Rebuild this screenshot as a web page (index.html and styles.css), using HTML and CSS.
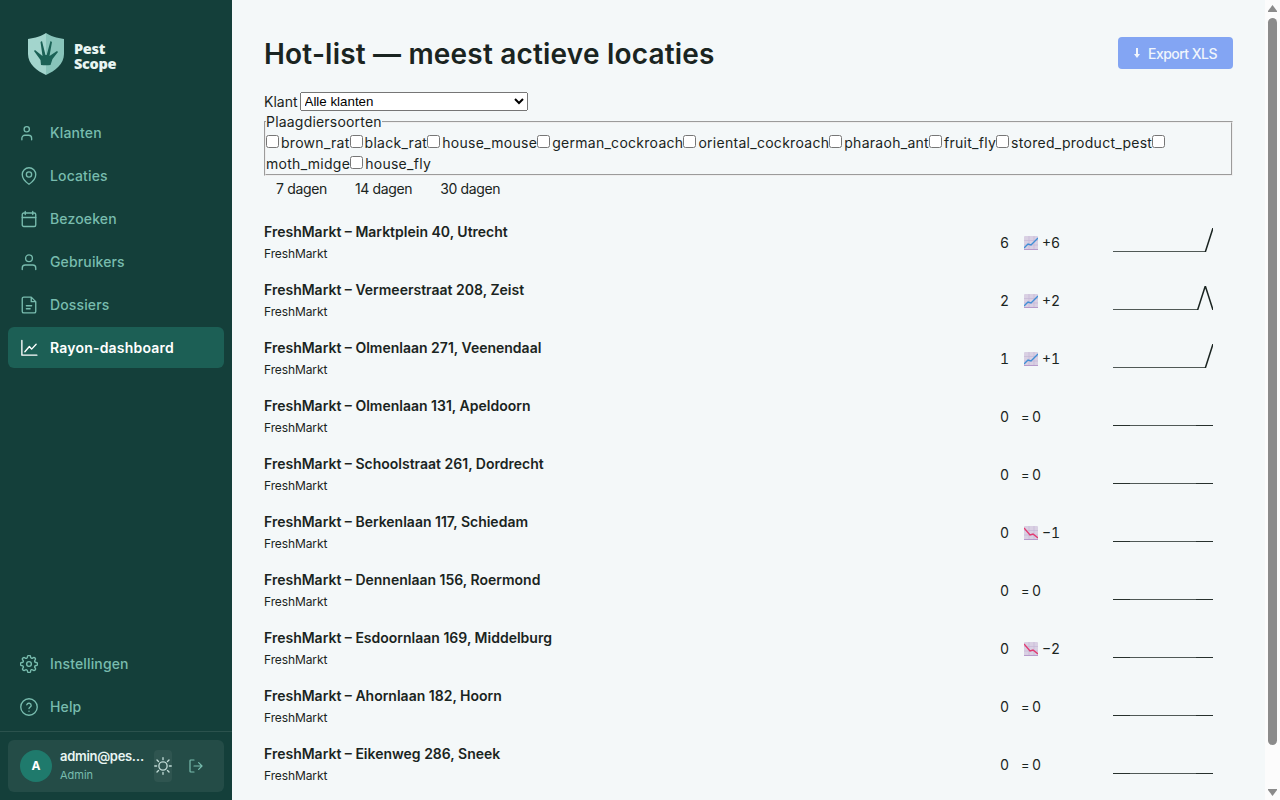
FILE: index.html
```html
<!DOCTYPE html>
<html lang="nl">
<head>
    <meta charset="UTF-8">
    <meta name="viewport" content="width=device-width, initial-scale=1.0">
    <title>PestScope – Rayon-dashboard</title>
    <link rel="stylesheet" href="styles.css">
</head>
<body>
    <aside class="sidebar">
        <div class="brand">
            <svg class="brand-logo" width="36" height="42" viewBox="0 0 36 42">
                <path fill="#a3d5cd" d="M18 0C14 3 7 5 0 6v15c0 10 9 17 18 21z"/>
                <path fill="#88c4ba" d="M18 0c4 3 11 5 18 6v15c0 10-9 17-18 21z"/>
                <path fill="#1b6156" d="M13 32l-.5-5-6.500-9 1-1 7.500 6-2-14 1.500-1 3.500 14h1.200l3.800-14 1.500 1-2.500 14 7.500-5 1 1-5.500 7-2 6q-4.500.5-9.500 0z"/>
            </svg>
            <div class="brand-name">Pest<br>Scope</div>
        </div>
        <nav class="nav">
            <a class="nav-item"><svg class="icon" viewBox="0 0 24 24"><circle cx="9" cy="7" r="3.500"/><path d="M2.500 21v-2a4 4 0 0 1 4-4h5a4 4 0 0 1 4 4v2"/></svg>Klanten</a>
            <a class="nav-item"><svg class="icon" viewBox="0 0 24 24"><path d="M21 10c0 7-9 13-9 13s-9-6-9-13a9 9 0 0 1 18 0z"/><circle cx="12" cy="10" r="3.500"/></svg>Locaties</a>
            <a class="nav-item"><svg class="icon" viewBox="0 0 24 24"><rect x="3" y="4" width="18" height="18" rx="2"/><path d="M17 2v4M7 2v4M3 10h18"/></svg>Bezoeken</a>
            <a class="nav-item"><svg class="icon" viewBox="0 0 24 24"><circle cx="12" cy="7" r="4.500"/><path d="M21 22v-2a4 4 0 0 0-4-4H7a4 4 0 0 0-4 4v2"/></svg>Gebruikers</a>
            <a class="nav-item"><svg class="icon" viewBox="0 0 24 24"><path d="M15 1.500H5a2 2 0 0 0-2 2v17a2 2 0 0 0 2 2h14a2 2 0 0 0 2-2v-13zM15 1.500v6h6M8.500 13h7M8.500 17h5"/></svg>Dossiers</a>
            <a class="nav-item active"><svg class="icon" viewBox="0 0 24 24"><path d="M2.500 2v19.500h20M6.500 17l6-7 3 3.500 6-6.500"/></svg>Rayon-dashboard</a>
        </nav>
        <nav class="nav">
            <a class="nav-item"><svg class="icon" viewBox="0.5 0.5 23 23"><circle cx="12" cy="12" r="3"/><path d="M19.400 15a1.650 1.650 0 0 0 .33 1.820l.06.06a2 2 0 1 1-2.830 2.830l-.06-.06a1.650 1.650 0 0 0-1.820-.33 1.650 1.650 0 0 0-1 1.510V21a2 2 0 0 1-4 0v-.09A1.650 1.650 0 0 0 9 19.400a1.650 1.650 0 0 0-1.820.33l-.06.06a2 2 0 1 1-2.830-2.830l.06-.06a1.650 1.650 0 0 0 .33-1.820 1.650 1.650 0 0 0-1.510-1H3a2 2 0 0 1 0-4h.09A1.650 1.650 0 0 0 4.600 9a1.650 1.650 0 0 0-.33-1.820l-.06-.06a2 2 0 1 1 2.830-2.830l.06.06a1.650 1.650 0 0 0 1.820.33H9a1.650 1.650 0 0 0 1-1.510V3a2 2 0 0 1 4 0v.09a1.650 1.650 0 0 0 1 1.510 1.650 1.650 0 0 0 1.820-.33l.06-.06a2 2 0 1 1 2.830 2.830l-.06.06a1.650 1.650 0 0 0-.33 1.820V9a1.650 1.650 0 0 0 1.510 1H21a2 2 0 0 1 0 4h-.09a1.650 1.650 0 0 0-1.510 1z"/></svg>Instellingen</a>
            <a class="nav-item"><svg class="icon" viewBox="0 0 24 24"><circle cx="12" cy="12" r="11"/><path d="M9.090 9a3 3 0 0 1 5.830 1c0 2-2.920 2.500-2.920 4M12 17.500v.1"/></svg>Help</a>
        </nav>
        <div class="user-wrap">
            <div class="user">
                <div class="avatar">A</div>
                <div class="user-text">
                    <div class="user-name">admin@pes…</div>
                    <div class="user-role">Admin</div>
                </div>
                <button class="theme-btn"><svg class="icon sun" viewBox="0 0 24 24"><circle cx="12" cy="12" r="5.500"/><path d="M12 1v2.500M12 20.500V23M1 12h2.500M20.500 12H23M4 4l2 2M18 18l2 2M4 20l2-2M18 6l2-2"/></svg></button>
                <svg class="icon logout" viewBox="0 0 24 24"><path d="M9 3H4a1 1 0 0 0-1 1v16a1 1 0 0 0 1 1h5M16 17l5-5-5-5M21 12H9"/></svg>
            </div>
        </div>
    </aside>

    <main class="content">
        <header class="page-header">
            <h1>Hot-list — meest actieve locaties</h1>
            <button class="export-btn" disabled><svg width="6" height="10" viewBox="0 0 6 10"><path d="M2 0h2v6h2L3 10 0 6h2z"/></svg><span>Export XLS</span></button>
        </header>
        <div class="klant"><label for="klant">Klant</label>
            <select id="klant"><option>Alle klanten</option></select>
        </div>
        <fieldset class="soorten">
            <legend>Plaagdiersoorten</legend>
            <label><input type="checkbox"><span>brown_rat</span></label><label><input type="checkbox"><span>black_rat</span></label><label><input type="checkbox"><span>house_mouse</span></label><label><input type="checkbox"><span>german_cockroach</span></label><label><input type="checkbox"><span>oriental_cockroach</span></label><label><input type="checkbox"><span>pharaoh_ant</span></label><label><input type="checkbox"><span>fruit_fly</span></label><label><input type="checkbox"><span>stored_product_pest</span></label><label><input type="checkbox"> <span>moth_midge</span></label><label><input type="checkbox"><span>house_fly</span></label>
        </fieldset>
        <div class="periods">
            <button>7 dagen</button><button>14 dagen</button><button>30 dagen</button>
        </div>
        <div class="hotlist" id="hotlist"></div>
    </main>

    <div class="scrollbar">
        <svg width="9" height="7" viewBox="0 0 9 7"><path d="M4.500 0L9 6v1H0V6z"/></svg>
        <div class="thumb"></div>
        <svg width="9" height="7" viewBox="0 0 9 7"><path d="M4.500 7L9 1V0H0v1z"/></svg>
    </div>
    <script src="script.js"></script>
</body>
</html>
```
FILE: styles.css
```css
* {
    box-sizing: border-box;
}

body {
    margin: 0;
    height: 800px;
    overflow: hidden;
    display: flex;
    font-family: Inter, "Liberation Sans", sans-serif;
    font-size: 14px;
    line-height: 21px;
    color: #1a2421;
    background: #f4f8f9;
}

button {
    font: inherit;
    border: 0;
    padding: 0;
    background: none;
    color: inherit;
}

/* sidebar */
.sidebar {
    width: 232px;
    flex: none;
    display: flex;
    flex-direction: column;
    background: #143f3a;
    color: #78bcae;
}

.brand {
    display: flex;
    gap: 10px;
    padding: 33px 28px 0;
    height: 112px;
}

.brand-name {
    font-family: "Noto Sans", sans-serif;
    font-weight: 900;
    font-size: 14.500px;
    line-height: 15px;
    letter-spacing: -0.3px;
    color: #e8f5f2;
    padding-top: 8px;
}

.nav {
    display: flex;
    flex-direction: column;
    gap: 2px;
    padding: 0 8px;
}

.nav + .nav {
    margin-top: auto;
    padding-bottom: 4px;
}

.nav-item {
    display: flex;
    align-items: center;
    gap: 12px;
    height: 41px;
    padding: 0 12px;
    border-radius: 6px;
    font-weight: 500;
    letter-spacing: 0.14px;
}

.nav-item.active {
    background: #1c5f55;
    color: #fff;
    font-weight: 600;
    letter-spacing: 0.2px;
}

.icon {
    width: 18px;
    height: 18px;
    flex: none;
    fill: none;
    stroke: currentColor;
    stroke-width: 1.8;
    stroke-linecap: round;
    stroke-linejoin: round;
}

.user-wrap {
    border-top: 1px solid #2b524d;
    padding: 8px;
}

.user {
    display: flex;
    align-items: center;
    height: 52px;
    padding: 0 12px;
    border-radius: 6px;
    background: #244c47;
}

.avatar {
    width: 32px;
    height: 32px;
    flex: none;
    border-radius: 50%;
    background: #1f7a6c;
    color: #fff;
    font-size: 12px;
    font-weight: 700;
    line-height: 32px;
    text-align: center;
}

.user-text {
    width: 102px;
    flex: none;
    padding-left: 8px;
    white-space: nowrap;
}

.user-name {
    font-size: 13px;
    font-weight: 600;
    line-height: 18px;
    letter-spacing: -0.3px;
    color: #e8f5f2;
}

.user-role {
    font-size: 11px;
    line-height: 20px;
}

.theme-btn {
    display: flex;
    align-items: center;
    justify-content: center;
    width: 18px;
    height: 32px;
    flex: none;
    border-radius: 4px;
    background: #2f5550;
    color: #c0dbd6;
}

.sun {
    width: 18px;
    height: 18px;
}

.logout {
    width: 18px;
    height: 16px;
    margin-left: 15px;
}

/* content */
.content {
    flex: 1;
    padding: 37px 32px 0;
}

.page-header {
    display: flex;
    justify-content: space-between;
    height: 55px;
}

h1 {
    margin: 0;
    font-size: 28px;
    font-weight: 600;
    line-height: 34px;
    letter-spacing: 0.19px;
    white-space: nowrap;
}

.export-btn {
    display: flex;
    align-items: center;
    justify-content: center;
    gap: 8px;
    width: 115px;
    height: 32px;
    border-radius: 4px;
    background: #83a5f3;
    color: #f0f5fc;
    font-weight: 500;
    letter-spacing: -0.55px;
}

.export-btn svg {
    fill: currentColor;
}

.klant {
    display: flex;
    align-items: center;
    gap: 2px;
    height: 19px;
    line-height: 18px;
}

.klant select {
    width: 228px;
    height: 19px;
    font-family: "Liberation Sans", sans-serif;
    font-size: 13.333px;
}

.soorten {
    margin: 0;
    padding: 0;
    height: 65px;
    border: 2px groove threedface;
}

.soorten legend {
    padding: 0;
    letter-spacing: 0.2px;
}

.soorten label {
    letter-spacing: 0.28px;
}

.soorten input {
    width: 13px;
    height: 13px;
    margin: 0 2px 0 0;
}

.periods {
    display: flex;
    gap: 28px;
    padding: 2px 12px 0;
    height: 45px;
}

.periods button {
    height: 21px;
    letter-spacing: -0.35px;
}

.row {
    display: grid;
    grid-template-columns: 736px 12px 1fr 100px;
    height: 58px;
    padding-right: 20px;
}

.row-title {
    font-weight: 600;
    line-height: 22px;
}

.row-client {
    font-size: 12px;
    line-height: 21px;
    letter-spacing: -0.1px;
}

.row-count,
.row-trend {
    padding-top: 11px;
    font-variant-numeric: tabular-nums;
}

.row-trend {
    display: flex;
    align-items: baseline;
    padding-left: 9px;
}

.row-trend svg {
    width: 14px;
    height: 14px;
    margin: 0 4px 0 3px;
    position: relative;
    top: 2px;
}

.row-trend .eq {
    width: 11px;
    font-size: 13px;
}

.spark {
    width: 100px;
    height: 24px;
    margin-top: 7px;
    fill: none;
    stroke: #1a2421;
    stroke-width: 1.5;
}

/* scrollbar */
.scrollbar {
    width: 15px;
    flex: none;
    display: flex;
    flex-direction: column;
    align-items: center;
    padding: 5px 0 4px;
    background: #fcfcfc;
}

.scrollbar svg {
    fill: #8b8b8b;
}

.thumb {
    width: 9px;
    height: 727px;
    margin: 6px 0 auto;
    border-radius: 5px;
    background: #8b8b8b;
}
```
FILE: script.js
```javascript
const rows = [
    ['Marktplein 40, Utrecht', 6, 6, '0,24 92.300,24 100,0'],
    ['Vermeerstraat 208, Zeist', 2, 2, '0,24 84.600,24 92.300,0 100,24'],
    ['Olmenlaan 271, Veenendaal', 1, 1, '0,24 92.300,24 100,0'],
    ['Olmenlaan 131, Apeldoorn', 0, 0],
    ['Schoolstraat 261, Dordrecht', 0, 0],
    ['Berkenlaan 117, Schiedam', 0, -1],
    ['Dennenlaan 156, Roermond', 0, 0],
    ['Esdoornlaan 169, Middelburg', 0, -2],
    ['Ahornlaan 182, Hoorn', 0, 0],
    ['Eikenweg 286, Sneek', 0, 0]
];

function chartIcon(up) {
    const line = up ? 'M0 12L4 8l3 1 7-7' : 'M0 2l6 7 3-1 5 4';
    return `<svg viewBox="0 0 14 14"><rect width="14" height="14" rx="1" fill="#d9d0e3"/>
        <path d="M5 0v13M10 0v13M0 4.500h14M0 9h14" stroke="#c5b8d5" stroke-width=".7"/>
        <path d="M0 13.500h14" stroke="#b79bcb"/>
        <path d="${line}" fill="none" stroke="${up ? '#3f8fd6' : '#e33b72'}" stroke-width="1.4"/></svg>`;
}

function trend(n) {
    if (n === 0) return '<span class="eq">=</span><span>0</span>';
    return chartIcon(n > 0) + `<span>${n > 0 ? '+' : '−'}${Math.abs(n)}</span>`;
}

document.getElementById('hotlist').innerHTML = rows.map(([name, count, diff, points]) => `
    <div class="row">
        <div>
            <div class="row-title">FreshMarkt – ${name}</div>
            <div class="row-client">FreshMarkt</div>
        </div>
        <div class="row-count">${count}</div>
        <div class="row-trend">${trend(diff)}</div>
        <svg class="spark" viewBox="0 0 100 24">${points
            ? `<polyline points="${points}"/>`
            : '<path d="M0 24h100"/><path d="M0 24h17M83 24h17"/>'}</svg>
    </div>`).join('');
```
